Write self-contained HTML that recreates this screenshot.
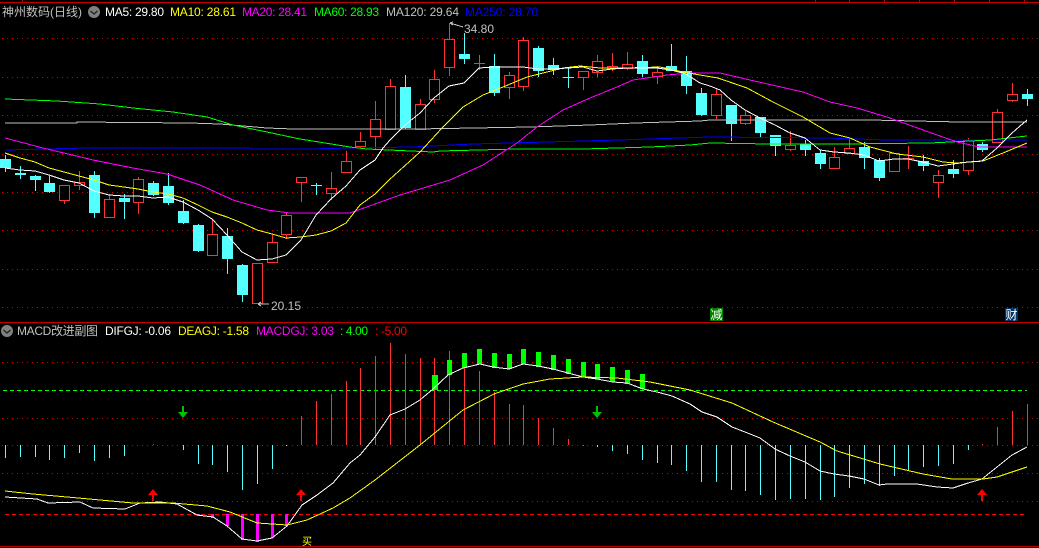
<!DOCTYPE html>
<html><head><meta charset="utf-8"><style>
html,body{margin:0;padding:0;background:#000;width:1039px;height:548px;overflow:hidden}
svg{display:block}
text{font-family:"Liberation Sans","WenQuanYi Zen Hei","Noto Sans CJK SC",sans-serif;font-size:12px}
.l{fill:none;stroke-width:1;shape-rendering:crispEdges}
</style></head><body>
<svg width="1039" height="548" viewBox="0 0 1039 548" xmlns="http://www.w3.org/2000/svg">
<rect width="1039" height="548" fill="#000"/>
<!-- frame -->
<g shape-rendering="crispEdges" stroke="#c00000" fill="none">
<path d="M0 2.5H1039M0 322.5H1039M0 546.5H1039M22.5 0V2M815.5 0V2M849.5 0V2M884.5 0V2M919.5 0V2M954.5 0V2M989.5 0V2M1024.5 0V2"/>
<path stroke="#d00000" stroke-dasharray="1 4" d="M2 38.5H1039M2 77.5H1039M2 115.5H1039M2 154.5H1039M2 192.5H1039M2 230.5H1039M2 269.5H1039M2 307.5H1039M2 362.5H1039M2 418.5H1039M2 445.5H1039M2 473.5H1039M2 501.5H1039"/>
<path stroke="#00ff00" stroke-dasharray="4 3" d="M3 390.5H1027"/>
<path stroke="#ff0000" stroke-dasharray="4 3" d="M5 514.5H1027"/>
</g>
<!-- candles -->
<g shape-rendering="crispEdges">
<path fill="none" stroke="#ff3232" d="M64.5 185V204M79.5 171V190M109.5 194V217M138.5 177V214M212.5 220V255M257.5 263V303M272.5 234V263M286.5 212V239M301.5 177V202M331.5 172V200M346.5 151V172M360.5 132V148M375.5 101V149M390.5 79V130M420.5 99V129M434.5 70V103M449.5 23V76M509.5 72V99M523.5 37V91M583.5 71V90M597.5 55V77M612.5 53V71M627.5 52V70M657.5 66V84M716.5 88V119M745.5 111V125M790.5 131V151M834.5 147V169M849.5 138V153M894.5 153V171M908.5 146V169M938.5 170V198M968.5 138V175M997.5 109V142M1012.5 83V102M479.5 55V70M474 63.5H485M903 158.5H914"/>
<path fill="#000" stroke="#ff3232" d="M59.5 185.5h10v15h-10zM74.5 182.5h10v3h-10zM104.5 199.5h10v18h-10zM133.5 179.5h10v23h-10zM207.5 234.5h10v21h-10zM252.5 263.5h10v40h-10zM267.5 242.5h10v20h-10zM281.5 215.5h10v19h-10zM296.5 177.5h10v5h-10zM326.5 188.5h10v5h-10zM341.5 161.5h10v11h-10zM355.5 141.5h10v5h-10zM370.5 119.5h10v17h-10zM385.5 86.5h10v43h-10zM415.5 104.5h10v25h-10zM429.5 79.5h10v20h-10zM444.5 39.5h10v28h-10zM504.5 75.5h10v12h-10zM518.5 40.5h10v46h-10zM578.5 71.5h10v6h-10zM592.5 61.5h10v11h-10zM607.5 66.5h10v2h-10zM622.5 64.5h10v4h-10zM652.5 72.5h10v4h-10zM711.5 94.5h10v21h-10zM740.5 115.5h10v8h-10zM785.5 145.5h10v4h-10zM829.5 157.5h10v11h-10zM844.5 148.5h10v5h-10zM889.5 153.5h10v18h-10zM933.5 175.5h10v7h-10zM963.5 140.5h10v30h-10zM992.5 112.5h10v30h-10zM1007.5 94.5h10v6h-10z"/>
<path fill="none" stroke="#54ffff" d="M5.5 155V172M20.5 166V179M35.5 175V191M49.5 176V193M94.5 171V218M124.5 194V219M153.5 181V196M168.5 173V205M183.5 200V224M198.5 224V252M227.5 228V274M242.5 264V302M316.5 183V195M405.5 75V129M464.5 33V64M494.5 54V96M538.5 46V77M553.5 58V75M568.5 68V88M642.5 55V77M671.5 44V71M686.5 56V94M701.5 88V116M731.5 105V141M760.5 117V137M775.5 135V156M805.5 140V156M820.5 150V169M864.5 142V169M879.5 158V181M923.5 155V171M953.5 160V178M982.5 142V152M1027.5 89V106"/>
<path fill="#54ffff" d="M0 159h11v9H0zM15 173h11v2H15zM30 176h11v4H30zM44 183h11v9H44zM89 175h11v38H89zM119 198h11v4H119zM148 183h11v12H148zM163 186h11v17H163zM178 211h11v12H178zM193 225h11v26H193zM222 236h11v23H222zM237 265h11v30H237zM311 185h11v1H311zM400 87h11v41H400zM459 54h11v5H459zM489 66h11v27H489zM533 48h11v23H533zM548 65h11v5H548zM563 77h11v1H563zM637 61h11v13H637zM666 66h11v5H666zM681 71h11v15H681zM696 93h11v22H696zM726 105h11v19H726zM755 117h11v16H755zM770 135h11v11H770zM800 144h11v6H800zM815 153h11v11H815zM859 147h11v11H859zM874 160h11v18H874zM918 161h11v5H918zM948 169h11v5H948zM977 144h11v6H977zM1022 94h11v5H1022z"/>
</g>
<!-- MAs -->
<polyline class="l" stroke="#c0c0c0" points="5,123 77,123 77,122 190,123 220,124 267,128 293,129 417,129 530,127 590,125 635,123 700,121 710,120 870,120 960,122 1027,122"/>
<polyline class="l" stroke="#0000ff" points="5,150 87,148 250,148 250,149 308,149 350,148 413,147 472,144 547,142 620,140 680,138 710,137 827,138 887,140 1027,140"/>
<polyline class="l" stroke="#00ff00" points="5,99 57,101 100,104 133,108 173,112 207,117 233,125 267,132 300,139 350,147 367,149 433,152 440,151 517,149 583,149 650,147 690,145 710,143 770,144 840,144 930,143 990,140 1027,136"/>
<polyline class="l" stroke="#ff00ff" points="5,138 43,148 93,160 133,168 167,174 200,185 233,200 267,210 290,213 333,213 350,213 400,195 450,180 483,165 517,143 537,127 563,110 590,98 617,87 633,80 667,75 690,73 720,73 750,80 803,92 830,102 857,108 890,118 923,130 957,142 980,147 1027,147"/>
<polyline class="l" stroke="#ffff00" points="5,153 20,158 35,162 49,168 64,172 79,176 94,180 109,185 124,187 138,189 153,192 168,194 183,198 198,205 212,212 227,217 242,223 257,230 272,234 286,238 301,237 316,235 331,231 346,223 360,205 375,194 389,180 420,152 442,128 463,107 483,95 503,87 527,77 547,72 563,68 580,66 600,68 627,68 660,67 683,72 700,75 718,78 747,88 773,102 803,117 830,133 850,138 870,147 897,154 923,157 943,162 957,163 983,161 1003,153 1027,143"/>
<polyline class="l" stroke="#ffffff" points="5,168 20,170 35,171 49,175 64,180 79,183 94,191 109,195 124,196 138,196 153,198 168,197 183,202 198,210 212,219 227,235 242,252 257,260 272,259 286,255 301,240 316,215 331,199 346,186 360,170 375,160 383,148 390,140 405,125 420,113 434,98 449,86 464,83 479,68 494,67 509,67 523,67 538,69 553,69 568,68 583,67 597,71 612,69 627,68 642,68 657,68 671,70 686,74 700,83 710,86 720,90 731,100 745,110 760,118 775,125 790,133 805,138 820,150 834,152 849,153 864,155 879,161 894,159 908,159 923,162 938,166 953,164 968,162 982,161 997,148 1012,133 1027,120"/>
<!-- annotations -->
<g fill="none" stroke="#c0c0c0" shape-rendering="crispEdges"><path d="M450 23L463 27M450 23l3 -1M450 23l3 2M258 304H269M258 304l3 -2M258 304l3 2"/></g>
<text x="464" y="33" fill="#c0c0c0" textLength="30" lengthAdjust="spacing">34.80</text>
<text x="271" y="310" fill="#c0c0c0" textLength="30" lengthAdjust="spacing">20.15</text>
<!-- badges -->
<rect x="710" y="308" width="13" height="13" fill="#008000"/>
<text x="710.5" y="319" fill="#fff" style="font-size:12px">减</text>
<rect x="1005" y="308" width="13" height="13" fill="#003366"/>
<text x="1005.5" y="319" fill="#fff" style="font-size:12px">财</text>
<!-- header -->
<text x="2" y="16" fill="#c0c0c0">神州数码(日线)</text>
<circle cx="94" cy="12" r="6" fill="#808080"/>
<path d="M90.5 11l3.5 3 3.5-3" fill="none" stroke="#222" stroke-width="1.3"/>
<text x="105" y="16" fill="#ffffff" textLength="59" lengthAdjust="spacing">MA5: 29.80</text>
<text x="170" y="16" fill="#ffff00" textLength="66" lengthAdjust="spacing">MA10: 28.61</text>
<text x="242" y="16" fill="#ff00ff" textLength="65" lengthAdjust="spacing">MA20: 28.41</text>
<text x="314" y="16" fill="#00ff00" textLength="65" lengthAdjust="spacing">MA60: 28.93</text>
<text x="386" y="16" fill="#c0c0c0" textLength="73" lengthAdjust="spacing">MA120: 29.64</text>
<text x="465" y="16" fill="#0000ff" textLength="73" lengthAdjust="spacing">MA250: 28.70</text>
<!-- MACD histogram -->
<g shape-rendering="crispEdges" fill="none">
<path stroke="#54ffff" d="M5.5 445V458M20.5 445V457M35.5 445V457M49.5 445V460M64.5 445V458M79.5 445V453M94.5 445V461M109.5 445V458M124.5 445V456M183.5 445V450M198.5 445V464M212.5 445V465M227.5 445V472M242.5 445V490M257.5 445V484M272.5 445V469M286.5 445V446M597.5 445V447M612.5 445V451M627.5 445V454M642.5 445V460M657.5 445V463M671.5 445V465M686.5 445V471M701.5 445V482M716.5 445V482M731.5 445V490M745.5 445V491M760.5 445V495M775.5 445V500M790.5 445V499M805.5 445V499M820.5 445V500M834.5 445V497M849.5 445V488M864.5 445V484M879.5 445V486M894.5 445V476M908.5 445V470M923.5 445V467M938.5 445V466M953.5 445V464M968.5 445V450"/>
<path stroke="#ff3232" d="M153.5 444V445M301.5 416V445M316.5 401V445M331.5 394V445M346.5 381V445M360.5 368V445M375.5 356V445M390.5 343V445M405.5 354V445M420.5 358V445M434.5 358V445M449.5 351V445M464.5 363V445M479.5 371V445M494.5 392V445M509.5 404V445M523.5 405V445M538.5 418V445M553.5 428V445M568.5 439V445M583.5 445V446M982.5 444V445M997.5 427V445M1012.5 411V445M1027.5 404V445"/>
<path fill="#00ff00" d="M432 375h6v15h-6zM447 360h5v15h-5zM462 353h5v15h-5zM477 349h5v15h-5zM492 353h5v15h-5zM507 354h5v15h-5zM521 349h5v15h-5zM536 352h5v15h-5zM551 355h5v15h-5zM566 359h5v15h-5zM581 362h5v15h-5zM595 364h5v15h-5zM610 367h5v15h-5zM625 370h5v14h-5zM640 374h5v15h-5z"/>
<path fill="#ff00ff" d="M197 514h3v2h-3zM211 514h3v4h-3zM226 514h3v12h-3zM241 514h3v26h-3zM256 514h3v28h-3zM271 514h3v24h-3zM285 514h3v12h-3z"/>
</g>
<polyline class="l" stroke="#ffffff" points="5,497 37,499 48,503 80,502 93,508 125,509 140,503 160,502 177,504 197,515 213,517 227,526 242,539 257,541 272,538 287,526 302,505 317,495 333,483 350,463 360,455 375,437 390,415 405,409 420,400 433,389 448,375 463,368 480,364 493,367 509,369 523,364 538,366 553,369 568,373 583,377 597,379 613,382 627,383 643,389 657,392 672,396 690,404 702,412 717,417 732,427 745,432 760,438 775,449 790,456 805,462 820,471 834,474 849,476 864,479 879,485 887,484 917,484 937,487 953,488 968,483 982,479 997,467 1012,455 1027,447"/>
<polyline class="l" stroke="#ffff00" points="5,491 33,494 67,497 100,500 133,503 173,503 207,506 230,512 257,523 287,525 307,520 333,508 350,498 375,480 420,445 463,410 494,394 523,384 550,379 583,377 617,378 650,382 690,390 732,403 773,422 820,442 837,451 880,464 923,474 952,479 983,479 997,477 1027,467"/>
<!-- arrows -->
<path fill="#ff0000" d="M153 489l5 6h-4v6h-2v-6h-4zM301 489l5 6h-4v6h-2v-6h-4zM982 489l5 6h-4v6h-2v-6h-4z"/>
<path fill="#00c000" d="M182 406h2v6h4l-5 6-5-6h4zM596 406h2v6h4l-5 6-5-6h4z"/>
<!-- MACD header -->
<circle cx="7" cy="331" r="6" fill="#808080"/>
<path d="M3.5 330l3.5 3 3.5-3" fill="none" stroke="#222" stroke-width="1.3"/>
<text x="17" y="335" fill="#c0c0c0" textLength="81" lengthAdjust="spacing">MACD改进副图</text>
<text x="105" y="335" fill="#ffffff" textLength="66" lengthAdjust="spacing">DIFGJ: -0.06</text>
<text x="178" y="335" fill="#ffff00" textLength="71" lengthAdjust="spacing">DEAGJ: -1.58</text>
<text x="256" y="335" fill="#ff00ff" textLength="78" lengthAdjust="spacing">MACDGJ: 3.03</text>
<text x="340" y="335" fill="#00ff00" textLength="28" lengthAdjust="spacing">: 4.00</text>
<text x="375" y="335" fill="#ff0000" textLength="32" lengthAdjust="spacing">: -5.00</text>
<text x="302" y="545" fill="#ffff00" style="font-size:10px">买</text>
</svg>
</body></html>
